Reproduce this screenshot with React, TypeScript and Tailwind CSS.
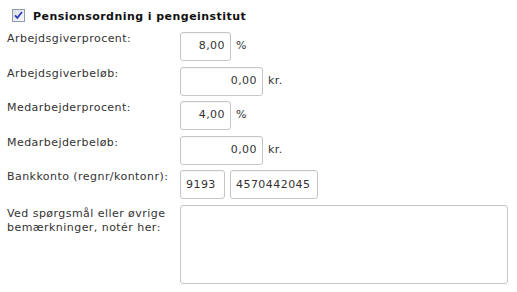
import React from "react";

const font = { fontFamily: '"DejaVu Sans", Verdana, sans-serif', letterSpacing: "0.45px" };

function Check() {
  return (
    <svg width="13" height="13" viewBox="0 0 13 13" className="block">
      <defs>
        <linearGradient id="cbg" x1="0" y1="0" x2="1" y2="1">
          <stop offset="0" stopColor="#dcdde3" />
          <stop offset="1" stopColor="#fbfbfd" />
        </linearGradient>
      </defs>
      <rect x="0.5" y="0.5" width="12" height="12" fill="url(#cbg)" stroke="#8f9aae" />
      <path d="M3 6.3 L5.3 8.8 L10 3" fill="none" stroke="#2a3fb8" strokeWidth="1.8" strokeLinejoin="miter" />
    </svg>
  );
}

function Box({ w, value, align = "right" }: { w: string; value: string; align?: "right" | "left" }) {
  return (
    <div
      className={`${w} h-[29px] border border-[#c6c6c6] rounded-[3px] bg-white flex items-center shadow-[inset_0_1px_1px_rgba(0,0,0,0.04)] ${
        align === "right" ? "justify-end pr-[5px]" : "justify-start pl-[5px]"
      } text-[11px] text-[#333]`}
    >
      {value}
    </div>
  );
}

function Row({ label, children }: { label: React.ReactNode; children: React.ReactNode }) {
  return (
    <div className="flex items-start">
      <div className="w-[180px] pl-[7px] whitespace-nowrap leading-[14px]">{label}</div>
      <div className="flex items-center">{children}</div>
    </div>
  );
}

export default function App() {
  return (
    <div className="w-[517px] h-[292px] bg-white text-[11px] text-[#333] overflow-hidden" style={font}>
      <div className="flex items-start pl-[12px] pt-[9px] h-[32px]">
        <Check />
        <span className="ml-[8px] mt-[1px] font-bold text-[#111] text-[11px] leading-[14px]">
          Pensionsordning i pengeinstitut
        </span>
      </div>
      <div className="flex flex-col gap-[5.6px]">
        <Row label="Arbejdsgiverprocent:">
          <Box w="w-[51px]" value="8,00" />
          <span className="ml-[5px]">%</span>
        </Row>
        <Row label="Arbejdsgiverbeløb:">
          <Box w="w-[83px]" value="0,00" />
          <span className="ml-[5px]">kr.</span>
        </Row>
        <Row label="Medarbejderprocent:">
          <Box w="w-[51px]" value="4,00" />
          <span className="ml-[5px]">%</span>
        </Row>
        <Row label="Medarbejderbeløb:">
          <Box w="w-[83px]" value="0,00" />
          <span className="ml-[5px]">kr.</span>
        </Row>
        <Row label="Bankkonto (regnr/kontonr):">
          <Box w="w-[45px]" value="9193" align="left" />
          <div className="ml-[5px]">
            <Box w="w-[88px]" value="4570442045" align="left" />
          </div>
        </Row>
        <Row
          label={
            <span className="block pt-[2px]">
              Ved spørgsmål eller øvrige
              <br />
              bemærkninger, notér her:
            </span>
          }
        >
          <div className="w-[328px] h-[79px] border border-[#c6c6c6] rounded-[3px] bg-white" />
        </Row>
      </div>
    </div>
  );
}
